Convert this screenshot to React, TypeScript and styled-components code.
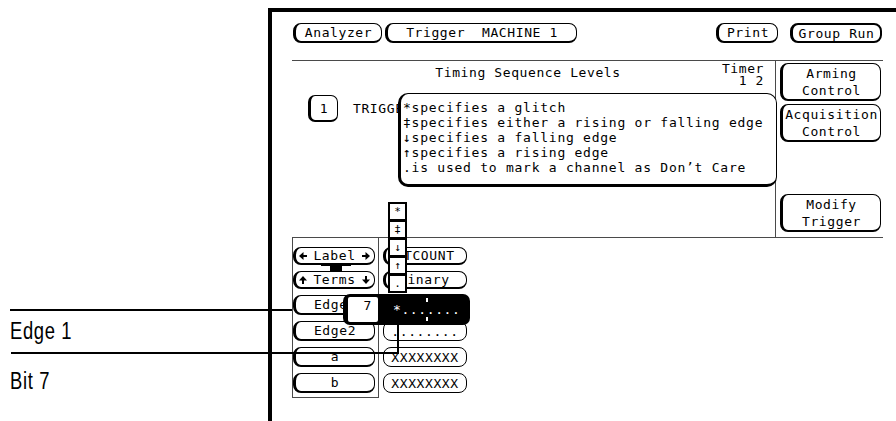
import styled, { createGlobalStyle } from "styled-components";

const MONO = `"DejaVu Sans Mono", "Liberation Mono", monospace`;
const LINE = "#4a4a4a";

const GlobalStyle = createGlobalStyle`
  html, body {
    margin: 0;
    padding: 0;
    background: #fff;
  }
`;

const Page = styled.div`
  position: relative;
  display: flex;
  width: 896px;
  height: 421px;
  overflow: hidden;
  background: #fff;
`;

const Gutter = styled.div`
  flex: none;
  width: 268px;
`;

const Screen = styled.div`
  flex: 1;
  margin-top: 8px;
  border-left: 4px solid #000;
  border-top: 4px solid #000;
  font-family: ${MONO};
  font-size: 13px;
  letter-spacing: 0.6px;
  color: #000;
`;

const TopBar = styled.div`
  box-sizing: border-box;
  display: flex;
  align-items: flex-start;
  gap: 3px;
  height: 48px;
  padding: 11px 14px 0 21px;
`;

const Spacer = styled.div`
  flex: 1;
`;

type KeyProps = {
  $w?: number;
  $h?: number;
  $bold?: boolean;
  $thin?: boolean;
  $start?: number;
};

const Key = styled.div<KeyProps>`
  box-sizing: border-box;
  flex: none;
  display: flex;
  flex-direction: column;
  align-items: ${(p) => (p.$start !== undefined ? "flex-start" : "center")};
  justify-content: center;
  width: ${(p) => (p.$w ? `${p.$w}px` : "auto")};
  height: ${(p) => p.$h ?? 20}px;
  padding-left: ${(p) => p.$start ?? 0}px;
  background: #fff;
  border: ${(p) => (p.$bold ? 2 : 1)}px solid #000;
  border-left-width: ${(p) => (p.$thin ? 1 : 3)}px;
  border-bottom-width: ${(p) => (p.$thin ? 1 : 2)}px;
  border-radius: 8px;
  line-height: 17px;
  white-space: pre;
`;

const Body = styled.div`
  position: relative;
  margin: 0 13px 0 20px;
`;

const Upper = styled.div`
  box-sizing: border-box;
  display: flex;
  height: 178px;
  border-top: 1px solid ${LINE};
  border-bottom: 1px solid ${LINE};
`;

const SeqPane = styled.div`
  position: relative;
  flex: 1;
`;

const Header = styled.div`
  display: flex;
  height: 26px;
`;

const HeaderSide = styled.div`
  flex: 1;
  padding: 2px 11px 0 0;
  text-align: right;
  line-height: 12px;
`;

const Title = styled.div`
  padding-top: 5px;
  line-height: 14px;
  white-space: pre;
`;

const TriggerRow = styled.div`
  display: flex;
  align-items: center;
  gap: 15px;
  margin-top: 8px;
  padding-left: 16px;
`;

const LevelBox = styled.div`
  box-sizing: border-box;
  display: flex;
  align-items: center;
  justify-content: center;
  width: 30px;
  height: 27px;
  border: 1px solid #000;
  border-left-width: 3px;
  border-bottom-width: 2px;
  border-radius: 7px;
`;

const Popup = styled.div`
  position: absolute;
  z-index: 2;
  left: 106px;
  top: 32px;
  box-sizing: border-box;
  width: 379px;
  height: 94px;
  padding: 6px 0 0 2px;
  background: #fff;
  border: 1px solid #000;
  border-left-width: 3px;
  border-bottom-width: 3px;
  border-radius: 10px;
  letter-spacing: 0.75px;
  line-height: 15px;
  white-space: pre;
`;

const SidePane = styled.div`
  box-sizing: border-box;
  display: flex;
  flex-direction: column;
  gap: 3px;
  width: 108px;
  padding: 2px 2px 5px 4px;
  border-left: 1px solid ${LINE};
`;

const PushDown = styled.div`
  margin-top: auto;
`;

const Lower = styled.div`
  display: flex;
  align-items: flex-start;
`;

const LabelCol = styled.div`
  position: relative;
  box-sizing: border-box;
  display: flex;
  flex-direction: column;
  gap: 6px;
  width: 87px;
  height: 160px;
  padding-top: 9px;
  border: 1px solid ${LINE};
  border-top: none;
`;

const ValueCol = styled.div`
  display: flex;
  flex-direction: column;
  gap: 6px;
  margin-left: 4px;
  padding-top: 9px;
`;

const LabelInner = styled.div`
  display: flex;
  align-items: center;
  justify-content: space-between;
  width: 100%;
  box-sizing: border-box;
  padding: 0 4px 0 3px;
`;

const Bridge = styled.svg`
  position: absolute;
  left: 28px;
  top: 27px;
`;

const GlyphList = styled.div`
  position: absolute;
  z-index: 3;
  left: 96px;
  top: 143px;
  display: flex;
  flex-direction: column;
`;

const GlyphBox = styled.div`
  box-sizing: border-box;
  width: 19px;
  height: 19px;
  margin-top: -1px;
  background: #fff;
  border: 2px solid #000;
  font-size: 11px;
  letter-spacing: 0;
  line-height: 15px;
  text-align: center;
`;

const BitEditor = styled.div`
  position: absolute;
  z-index: 3;
  left: 51px;
  top: 234px;
  box-sizing: border-box;
  display: flex;
  width: 127px;
  height: 31px;
  padding: 3px 0 3px 5px;
  background: #000;
  border-radius: 7px;
`;

const BitNumber = styled.div`
  box-sizing: border-box;
  width: 30px;
  padding: 2px 6px 0 0;
  background: #fff;
  border-radius: 2px;
  line-height: 14px;
  text-align: right;
`;

const BitField = styled.div`
  position: relative;
  flex: 1;
  padding-left: 15px;
  color: #fff;
  line-height: 25px;
  white-space: pre;
`;

const NibbleMark = styled.span<{ $bottom?: boolean }>`
  position: absolute;
  left: 48px;
  ${(p) => (p.$bottom ? "bottom: 1px;" : "top: 1px;")}
  width: 2px;
  height: 4px;
  background: #fff;
`;

const Leader = styled.div`
  position: absolute;
  z-index: 4;
  background: #000;
`;

const Caption = styled.div`
  position: absolute;
  left: 10px;
  font-family: "Liberation Sans", Arial, sans-serif;
  font-size: 23px;
  letter-spacing: 0.8px;
  line-height: 24px;
  color: #000;
  transform: scaleX(0.8);
  transform-origin: left top;
  white-space: nowrap;
`;

type Dir = "left" | "right" | "up" | "down";

function Arrow({ dir }: { dir: Dir }) {
  const rot = { right: 0, down: 90, left: 180, up: 270 }[dir];
  return (
    <svg width="8" height="8" viewBox="0 0 8 8">
      <g transform={`rotate(${rot} 4 4)`}>
        <polygon points="8,4 3.5,0 3.5,8" fill="#000" />
        <rect x="0" y="3" width="4" height="2" fill="#000" />
      </g>
    </svg>
  );
}

const helpLines = [
  "*specifies a glitch",
  "‡specifies either a rising or falling edge",
  "↓specifies a falling edge",
  "↑specifies a rising edge",
  ".is used to mark a channel as Don’t Care",
];

const glyphs = ["*", "‡", "↓", "↑", "."];

const labelRows = [
  { name: "Edge1", value: "*.......", thin: false },
  { name: "Edge2", value: "........", thin: true },
  { name: "a", value: "XXXXXXXX", thin: true },
  { name: "b", value: "XXXXXXXX", thin: true },
];

export default function App() {
  return (
    <>
      <GlobalStyle />
      <Page>
        <Gutter />
        <Screen>
          <TopBar>
            <Key $w={89}>Analyzer</Key>
            <Key $w={192}>Trigger  MACHINE 1</Key>
            <Spacer />
            <Key $w={62}>Print</Key>
            <Key $w={92} $bold style={{ marginLeft: 9 }}>
              Group Run
            </Key>
          </TopBar>
          <Body>
            <Upper>
              <SeqPane>
                <Header>
                  <Spacer />
                  <Title>Timing Sequence Levels</Title>
                  <HeaderSide>
                    Timer
                    <br />1 2
                  </HeaderSide>
                </Header>
                <TriggerRow>
                  <LevelBox>1</LevelBox>
                  <span>TRIGGER</span>
                </TriggerRow>
                <Popup>
                  {helpLines.map((line) => (
                    <div key={line}>{line}</div>
                  ))}
                </Popup>
              </SeqPane>
              <SidePane>
                <Key $w={101} $h={38}>
                  <span>Arming</span>
                  <span>Control</span>
                </Key>
                <Key $w={101} $h={38}>
                  <span>Acquisition</span>
                  <span>Control</span>
                </Key>
                <PushDown>
                  <Key $w={101} $h={38}>
                    <span>Modify</span>
                    <span>Trigger</span>
                  </Key>
                </PushDown>
              </SidePane>
            </Upper>
            <Lower>
              <LabelCol>
                <Key $w={82} $h={18}>
                  <LabelInner>
                    <Arrow dir="left" />
                    Label
                    <Arrow dir="right" />
                  </LabelInner>
                </Key>
                <Key $w={82} $h={18}>
                  <LabelInner>
                    <Arrow dir="up" />
                    Terms
                    <Arrow dir="down" />
                  </LabelInner>
                </Key>
                {labelRows.map((r) => (
                  <Key key={r.name} $w={82}>
                    {r.name}
                  </Key>
                ))}
                <Bridge width="30" height="8" viewBox="0 0 30 8">
                  <rect x="0" y="0" width="30" height="1" fill="#000" />
                  <rect x="9" y="0" width="12" height="7" fill="#000" />
                </Bridge>
              </LabelCol>
              <ValueCol>
                <Key $w={84} $h={18} $start={18}>
                  TCOUNT
                </Key>
                <Key $w={84} $h={18} $start={13}>
                  Binary
                </Key>
                {labelRows.map((r) => (
                  <Key key={r.name} $w={84} $thin={r.thin}>
                    {r.value}
                  </Key>
                ))}
              </ValueCol>
            </Lower>
            <GlyphList>
              {glyphs.map((g) => (
                <GlyphBox key={g}>{g}</GlyphBox>
              ))}
            </GlyphList>
            <BitEditor>
              <BitNumber>7</BitNumber>
              <BitField>
                *.......
                <NibbleMark />
                <NibbleMark $bottom />
              </BitField>
            </BitEditor>
          </Body>
        </Screen>

        <Leader style={{ left: 10, top: 309, width: 282, height: 2 }} />
        <Caption style={{ top: 319 }}>Edge 1</Caption>
        <Leader style={{ left: 11, top: 352, width: 388, height: 2 }} />
        <Leader style={{ left: 397, top: 323, width: 2, height: 31 }} />
        <Caption style={{ top: 369 }}>Bit 7</Caption>
      </Page>
    </>
  );
}
